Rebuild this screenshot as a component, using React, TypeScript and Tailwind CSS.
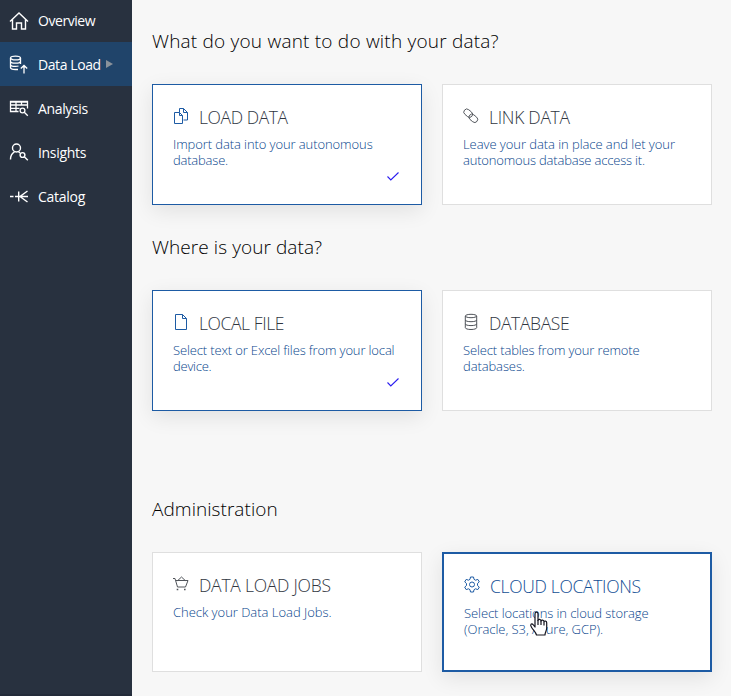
import type { ReactNode } from "react";

const stroke = {
  fill: "none",
  stroke: "currentColor",
  strokeWidth: 1,
} as const;

function HomeIcon() {
  return (
    <svg width="20" height="20" viewBox="0 0 20 20" {...stroke} strokeWidth={1.4}>
      <path d="M1 10.5 10 2l9 8.5M3.5 8.5V18h4v-6h5v6h4V8.5" />
    </svg>
  );
}

function DataLoadIcon() {
  return (
    <svg width="20" height="20" viewBox="0 0 20 20" {...stroke} strokeWidth={1.3}>
      <ellipse cx="6.5" cy="3" rx="5" ry="1.900" />
      <path d="M1.500 3v9.500c0 1.300 2.200 2 5 2h2.500M11.500 3v6M1.500 6.200c0 1.300 2.200 2 5 2s5-.7 5-2M1.500 9.400c0 1.300 2.200 2 5 2 1 0 2 0 3-.4M15 18.500v-8M11.800 13.500l3.200-3 3.200 3" />
    </svg>
  );
}

function AnalysisIcon() {
  return (
    <svg width="20" height="20" viewBox="0 0 20 20" {...stroke} strokeWidth={1.3}>
      <path d="M9.500 12.500h-8v-10h17v7M1.500 3h17M1.500 6h17M1.500 9.300h9M7 2.500v10M12.500 2.500V6" />
      <circle cx="13.500" cy="11.500" r="2.400" />
      <path d="m15.300 13.300 3.500 3.500" />
    </svg>
  );
}

function InsightsIcon() {
  return (
    <svg width="20" height="20" viewBox="0 0 20 20" {...stroke} strokeWidth={1.4}>
      <circle cx="7.500" cy="5" r="4" />
      <path d="M1.500 16.500c0-4 1.500-6.200 4-7.600M9.500 8.700l1.500 1.200" />
      <circle cx="13.500" cy="12" r="2.400" />
      <path d="m15.300 13.800 3.500 3.500" />
    </svg>
  );
}

function CatalogIcon() {
  return (
    <svg width="20" height="20" viewBox="0 0 20 20" {...stroke} strokeWidth={1.4}>
      <path d="M1 9.500h3.500M6 9.500h3M9.500 9.500h9.500M9.700 4.500v10M18.500 4 11 9.500l7.500 5.500" />
    </svg>
  );
}

function CopyIcon() {
  return (
    <svg width="16" height="18" viewBox="0 0 16 18" {...stroke}>
      <path d="M1.500 5.500h5l3 3v8h-8zM6.500 5.500v3h3M6.500 5V1.500h4l4 4v7.500h-4M10.500 1.500v4h4" />
    </svg>
  );
}

function LinkIcon() {
  return (
    <svg width="16" height="18" viewBox="0 0 16 18" {...stroke} strokeWidth={0.9}>
      <rect x="-4.800" y="-3" width="9.600" height="6" rx="3" transform="translate(5.200 6.200) rotate(40)" />
      <rect x="-4.800" y="-3" width="9.600" height="6" rx="3" transform="translate(10.300 11.300) rotate(40)" />
    </svg>
  );
}

function FileIcon() {
  return (
    <svg width="16" height="18" viewBox="0 0 16 18" {...stroke}>
      <path d="M2.500 1.500h7l4 4v11h-11zM9.500 1.500v4h4" />
    </svg>
  );
}

function DatabaseIcon() {
  return (
    <svg width="16" height="18" viewBox="0 0 16 18" {...stroke}>
      <ellipse cx="8" cy="3" rx="5.700" ry="1.700" />
      <path d="M2.300 3v11.700c0 1 2.500 1.800 5.700 1.800s5.700-.8 5.700-1.800V3M2.300 7c0 1 2.500 1.700 5.700 1.700s5.700-.7 5.700-1.700M2.300 10.900c0 1 2.500 1.700 5.700 1.700s5.700-.7 5.700-1.700" />
    </svg>
  );
}

function BasketIcon() {
  return (
    <svg width="16" height="18" viewBox="0 0 16 18" {...stroke}>
      <path d="M0 3.500h2l2.500 8.500h8l2.500-6.500H3M4.800 5.500 8.500 2l3.700 3.500" />
      <path d="M3.700 14.500h1.600M11 14.500h1.600" strokeWidth="1.500" />
    </svg>
  );
}

function GearIcon() {
  return (
    <svg width="17" height="18" viewBox="0 0 17 18" {...stroke}>
      <circle cx="8" cy="8.500" r="2.500" />
      <path d="M6.500 1h3l.5 2.300 1.500.9 2.300-.8 1.500 2.500-1.800 1.600v2l1.800 1.600-1.500 2.500-2.300-.8-1.500.9-.5 2.300h-3L6 13.700l-1.500-.9-2.300.8-1.500-2.500 1.800-1.600v-2L.7 5.900l1.500-2.500 2.300.8L6 3.300z" strokeLinejoin="round" />
    </svg>
  );
}

function CheckMark() {
  return (
    <svg width="12" height="9" viewBox="0 0 12 9" fill="none" stroke="#2a1cf0" strokeWidth="1.100">
      <path d="m.5 4.500 3.300 3.500L11.500.500" />
    </svg>
  );
}

function HandCursor() {
  return (
    <svg className="absolute left-[85px] top-[57px]" width="19" height="26" viewBox="0 0 19 26" fill="white" stroke="#15151f" strokeWidth="1.200" strokeLinejoin="round">
      <path d="M6 14V3c0-2.400 3-2.400 3 0v6.500c.3-1.600 2.900-1.400 3 .5.400-1.400 2.800-1.200 3 .7.500-1.200 2.700-.8 2.700 1V17c0 3-1.700 4-1.700 7H7.500c-.8-3-3-4.500-5-7.800C.600 13.500 2.500 12 4 13.500L6 16z" />
      <path d="M9 9v5M12 10v4M15 11v3.500" />
    </svg>
  );
}

type NavItemProps = { icon: ReactNode; label: string; tracking: string; active?: boolean };

function NavItem({ icon, label, tracking, active }: NavItemProps) {
  return (
    <a className={`flex h-11 shrink-0 items-center pt-0.5 pl-[9px] text-white ${active ? "bg-[#20446a]" : ""}`}>
      {icon}
      <span className={`ml-[9px] whitespace-nowrap text-[14px] leading-5 ${tracking}`}>{label}</span>
      {active && <span className="-mt-0.5 ml-[5px] h-0 w-0 border-y-[4px] border-l-[7px] border-y-transparent border-l-[#8a929b]" />}
    </a>
  );
}

type CardProps = {
  icon: ReactNode;
  title: string;
  titleTracking: string;
  lines: { text: string; tracking: string }[];
  state?: "selected" | "hover";
  size?: string;
  children?: ReactNode;
};

function Card({ icon, title, titleTracking, lines, state, size = "h-[121px]", children }: CardProps) {
  const frame =
    state === "hover"
      ? "border-2 border-[#1d5ba4] shadow-[0_6px_20px_rgba(0,0,0,0.09)]"
      : state === "selected"
        ? "border border-[#1d5ba4] shadow-[0_6px_20px_rgba(0,0,0,0.09)]"
        : "border border-[#dfdfdf]";
  return (
    <article className={`relative w-[270px] bg-white px-5 pt-5 ${size} ${frame}`}>
      <div className={`flex h-6 items-center ${state === "hover" ? "text-[#124e94]" : "text-[#30363f]"}`}>
        <span className={`-mt-[3px] w-[26px] ${state ? "text-[#1d5ba4]" : "text-[#50545a]"}`}>{icon}</span>
        <h3 className={`whitespace-nowrap text-[17.500px] leading-6 font-light ${titleTracking}`}>{title}</h3>
      </div>
      <div className="mt-[7px] text-[13px] leading-4 text-[#08458c]">
        {lines.map((line) => (
          <p key={line.text} className={`whitespace-nowrap font-light ${line.tracking}`}>{line.text}</p>
        ))}
      </div>
      {state === "selected" && (
        <div className="mt-1 mr-0.5 flex justify-end">
          <CheckMark />
        </div>
      )}
      {children}
    </article>
  );
}

function Heading({ children, tracking }: { children: ReactNode; tracking: string }) {
  return <h2 className={`h-7 whitespace-nowrap text-[19px] leading-7 font-light text-black ${tracking}`}>{children}</h2>;
}

export default function App() {
  return (
    <div className="flex h-[696px] w-[731px] overflow-hidden bg-[#f7f7f7] font-['Open_Sans','Noto_Sans',sans-serif]">
      <nav className="flex w-[132px] shrink-0 flex-col border-b-2 border-[#232b39] bg-[#28313f]">
        <div className="-mt-0.5">
          <NavItem icon={<HomeIcon />} label="Overview" tracking="tracking-[-0.45px]" />
        </div>
        <NavItem icon={<DataLoadIcon />} label="Data Load" tracking="tracking-[-0.42px]" active />
        <NavItem icon={<AnalysisIcon />} label="Analysis" tracking="tracking-[-0.35px]" />
        <NavItem icon={<InsightsIcon />} label="Insights" tracking="tracking-[-0.32px]" />
        <NavItem icon={<CatalogIcon />} label="Catalog" tracking="tracking-[-0.27px]" />
      </nav>
      <main className="flex flex-col pt-[27px] pl-5">
        <section>
          <Heading tracking="tracking-[0.21px]">What do you want to do with your data?</Heading>
          <div className="mt-[29px] flex gap-5">
            <Card
              icon={<CopyIcon />}
              title="LOAD DATA"
              titleTracking="tracking-[-0.4px]"
              lines={[
                { text: "Import data into your autonomous", tracking: "tracking-[-0.09px]" },
                { text: "database.", tracking: "tracking-[-0.2px]" },
              ]}
              state="selected"
            />
            <Card
              icon={<LinkIcon />}
              title="LINK DATA"
              titleTracking="tracking-[-0.28px]"
              lines={[
                { text: "Leave your data in place and let your", tracking: "tracking-[-0.06px]" },
                { text: "autonomous database access it.", tracking: "tracking-[-0.18px]" },
              ]}
            />
          </div>
        </section>
        <section className="mt-7">
          <Heading tracking="tracking-[0.08px]">Where is your data?</Heading>
          <div className="mt-[29px] flex gap-5">
            <Card
              icon={<FileIcon />}
              title="LOCAL FILE"
              titleTracking="tracking-[-0.4px]"
              lines={[
                { text: "Select text or Excel files from your local", tracking: "tracking-[-0.14px]" },
                { text: "device.", tracking: "tracking-[-0.25px]" },
              ]}
              state="selected"
            />
            <Card
              icon={<DatabaseIcon />}
              title="DATABASE"
              titleTracking="tracking-[-0.38px]"
              lines={[
                { text: "Select tables from your remote", tracking: "tracking-[-0.14px]" },
                { text: "databases.", tracking: "tracking-[-0.1px]" },
              ]}
            />
          </div>
        </section>
        <section className="mt-[84px]">
          <Heading tracking="tracking-[0.05px]">Administration</Heading>
          <div className="mt-[29px] flex gap-5">
            <Card
              icon={<BasketIcon />}
              title="DATA LOAD JOBS"
              titleTracking="tracking-[-0.24px]"
              lines={[{ text: "Check your Data Load Jobs.", tracking: "tracking-[-0.02px]" }]}
              size="h-[120px]"
            />
            <Card
              icon={<GearIcon />}
              title="CLOUD LOCATIONS"
              titleTracking="tracking-[-0.32px]"
              lines={[
                { text: "Select locations in cloud storage", tracking: "tracking-[-0.08px]" },
                { text: "(Oracle, S3, Azure, GCP).", tracking: "tracking-[-0.04px]" },
              ]}
              state="hover"
              size="h-[120px]"
            >
              <HandCursor />
            </Card>
          </div>
        </section>
      </main>
    </div>
  );
}
